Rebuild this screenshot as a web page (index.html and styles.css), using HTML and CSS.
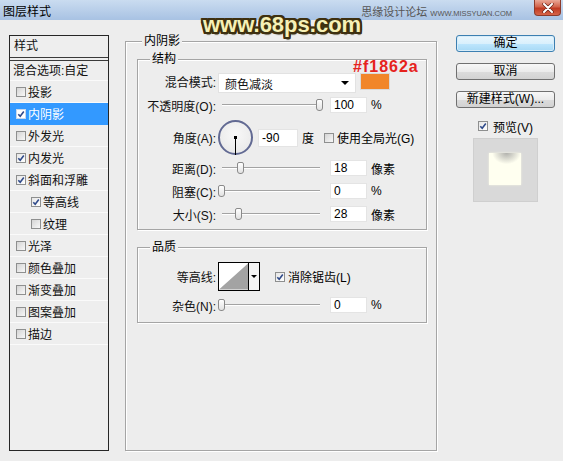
FILE: index.html
```html
<!DOCTYPE html>
<html lang="zh">
<head>
<meta charset="utf-8">
<title>图层样式</title>
<link rel="stylesheet" href="styles.css">
</head>
<body>
<div class="win">
  <div class="titlebar">
    <span class="title">图层样式</span>
    <span class="site">思缘设计论坛 <span class="url">WWW.MISSYUAN.COM</span></span>
    <span class="close"><svg width="14" height="10" viewBox="0 0 14 10"><path d="M3 1 L11 9 M11 1 L3 9" stroke="#6b2418" stroke-width="3.4" stroke-linecap="round"/><path d="M3 1 L11 9 M11 1 L3 9" stroke="#fff" stroke-width="2" stroke-linecap="round"/></svg></span>
  </div>
  <div class="content">
    <div class="styles">
      <div class="hdr">样式</div>
      <div class="blend">混合选项:自定</div>
      <div class="item"><span class="cb"></span>投影</div>
      <div class="item sel"><span class="cb on"><svg viewBox="0 0 8 8"><path d="M1.3 4.2 L3.2 6.2 L6.8 1.6" fill="none" stroke="#2f4a8a" stroke-width="1.6"/></svg></span>内阴影</div>
      <div class="item"><span class="cb"></span>外发光</div>
      <div class="item"><span class="cb on"><svg viewBox="0 0 8 8"><path d="M1.3 4.2 L3.2 6.2 L6.8 1.6" fill="none" stroke="#2f4a8a" stroke-width="1.6"/></svg></span>内发光</div>
      <div class="item"><span class="cb on"><svg viewBox="0 0 8 8"><path d="M1.3 4.2 L3.2 6.2 L6.8 1.6" fill="none" stroke="#2f4a8a" stroke-width="1.6"/></svg></span>斜面和浮雕</div>
      <div class="item sub"><span class="cb on"><svg viewBox="0 0 8 8"><path d="M1.3 4.2 L3.2 6.2 L6.8 1.6" fill="none" stroke="#2f4a8a" stroke-width="1.6"/></svg></span>等高线</div>
      <div class="item sub"><span class="cb"></span>纹理</div>
      <div class="item"><span class="cb"></span>光泽</div>
      <div class="item"><span class="cb"></span>颜色叠加</div>
      <div class="item"><span class="cb"></span>渐变叠加</div>
      <div class="item"><span class="cb"></span>图案叠加</div>
      <div class="item"><span class="cb"></span>描边</div>
    </div>

    <div class="outer group">
      <span class="legend lg-outer">内阴影</span>
      <div class="struct group">
        <span class="legend">结构</span>
        <div class="row r1">
          <span class="lbl">混合模式:</span>
          <div class="select"><span>颜色减淡</span><i class="arrow"></i></div>
          <span class="swatch"></span>
        </div>
        <div class="row r2">
          <span class="lbl">不透明度(O):</span>
          <div class="slider"><span class="thumb" style="left:98px"></span></div>
          <span class="num">100</span>
          <span class="unit">%</span>
        </div>
        <div class="row r3">
          <span class="lbl">角度(A):</span>
          <div class="dial"></div>
          <span class="num wide">-90</span>
          <span class="unit">度</span>
          <span class="cb gl"></span>
          <span class="cbtext">使用全局光(G)</span>
        </div>
        <div class="row r4">
          <span class="lbl">距离(D):</span>
          <div class="slider"><span class="thumb" style="left:19px"></span></div>
          <span class="num">18</span>
          <span class="unit">像素</span>
        </div>
        <div class="row r5">
          <span class="lbl">阻塞(C):</span>
          <div class="slider"><span class="thumb" style="left:0px"></span></div>
          <span class="num">0</span>
          <span class="unit">%</span>
        </div>
        <div class="row r5">
          <span class="lbl">大小(S):</span>
          <div class="slider"><span class="thumb" style="left:17px"></span></div>
          <span class="num">28</span>
          <span class="unit">像素</span>
        </div>
      </div>

      <div class="quality group">
        <span class="legend">品质</span>
        <div class="row q1">
          <span class="lbl">等高线:</span>
          <div class="contour">
            <svg class="curve" width="30" height="27" viewBox="0 0 30 27"><rect width="30" height="27" fill="#fff"/><polygon points="0,27 30,0 30,27" fill="#a3a3a3"/></svg>
            <span class="drop"><i class="arrow small"></i></span>
          </div>
          <span class="cb on aa"><svg viewBox="0 0 8 8"><path d="M1.3 4.2 L3.2 6.2 L6.8 1.6" fill="none" stroke="#2f4a8a" stroke-width="1.6"/></svg></span>
          <span class="cbtext">消除锯齿(L)</span>
        </div>
        <div class="row q2">
          <span class="lbl">杂色(N):</span>
          <div class="slider"><span class="thumb" style="left:0px"></span></div>
          <span class="num">0</span>
          <span class="unit">%</span>
        </div>
      </div>
    </div>

    <div class="side">
      <div class="btn primary">确定</div>
      <div class="btn">取消</div>
      <div class="btn">新建样式(W)...</div>
      <div class="prevrow"><span class="cb on"><svg viewBox="0 0 8 8"><path d="M1.3 4.2 L3.2 6.2 L6.8 1.6" fill="none" stroke="#2f4a8a" stroke-width="1.6"/></svg></span><span>预览(V)</span></div>
      <div class="preview"><div class="swatchprev"></div></div>
    </div>
  </div>

  <div class="wm">www.68ps.com</div>
  <div class="hex">#f1862a</div>
</div>
</body>
</html>
```

FILE: styles.css
```css
* { box-sizing: border-box; }
html, body { margin: 0; padding: 0; }
body {
  background: #ededed;
  font-family: "Liberation Sans", "Noto Sans CJK SC", sans-serif;
  font-size: 12px;
  color: #111;
}
.win {
  position: relative;
  width: 563px;
  height: 461px;
  overflow: hidden;
  background: #ededed;
}

/* title bar */
.titlebar {
  height: 20px;
  display: flex;
  align-items: center;
  background: linear-gradient(#cadcf0, #a8c2e3);
}
.title { margin-left: 3px; font-size: 12px; color: #000; }
.site {
  margin-left: auto;
  margin-right: 22px;
  align-self: flex-end;
  font-size: 11px;
  line-height: 13px;
  color: #555;
  white-space: nowrap;
}
.url { font-size: 7.5px; letter-spacing: 0; color: #555; }
.close {
  align-self: flex-start;
  width: 27px;
  height: 16px;
  margin-right: 2px;
  border: 1px solid #8c3b2c;
  border-top: none;
  border-radius: 0 0 4px 4px;
  background: linear-gradient(#eaa896, #d3644c 45%, #c03a22 55%, #d6654a);
  display: flex;
  align-items: center;
  justify-content: center;
}

/* layout */
.content {
  display: flex;
  align-items: flex-start;
  padding: 15px 0 0 9px;
}

/* styles list */
.styles {
  flex: none;
  width: 100px;
  height: 416px;
  border: 1px solid #262626;
  background: #eeeeee;
}
.hdr {
  height: 25px;
  line-height: 21px;
  padding-left: 4px;
  border-bottom: 4px double #3a3a3a;
}
.blend {
  height: 20px;
  line-height: 20px;
  padding-left: 3px;
  border-bottom: 1px solid #fafafa;
}
.item {
  height: 22px;
  display: flex;
  align-items: center;
  padding-left: 6px;
  border-bottom: 1px solid #fafafa;
}
.item.sub { padding-left: 21px; }
.item .cb { margin-right: 2px; }
.item.sel { background: #3399ff; color: #fff; border-bottom-color: #3399ff; }
.item.sel .cb { background: #fff; border-color: #c7d8ec; }

/* checkbox */
.cb {
  flex: none;
  display: inline-flex;
  width: 10px;
  height: 10px;
  border: 1px solid #8e8f8f;
  background: linear-gradient(135deg, #d4d4d4, #f8f8f8);
}
.cb svg { width: 8px; height: 8px; display: block; }
.cb.on { background: linear-gradient(135deg, #e6e6e6, #ffffff); }

/* group boxes */
.group {
  position: relative;
  border: 1px solid #a5a5a5;
  box-shadow: 1px 1px 0 #fff, inset 1px 1px 0 #fff;
}
.legend {
  position: absolute;
  top: -8px;
  left: 12px;
  padding: 0 2px;
  line-height: 14px;
  background: #ededed;
  color: #000;
}
.legend.lg-outer { left: 16px; }
.outer {
  flex: none;
  margin: 6px 0 0 16px;
  width: 312px;
  height: 410px;
  padding: 17px 0 0 11px;
}
.struct {
  width: 290px;
  height: 171px;
  padding-top: 13px;
}
.quality {
  width: 290px;
  height: 76px;
  margin-top: 17px;
  padding-top: 14px;
}

/* rows */
.row { display: flex; align-items: center; }
.lbl {
  flex: none;
  width: 78px;
  text-align: right;
  white-space: nowrap;
}
.r1 { height: 20px; align-items: flex-start; }
.r1 .lbl { line-height: 20px; }
.r2 { height: 16px; margin-top: 4px; }
.r3 { height: 35px; margin-top: 7px; }
.r4 { height: 16px; margin-top: 5px; }
.r5 { height: 16px; margin-top: 7px; }
.q1 { height: 29px; }
.q2 { height: 16px; margin-top: 6px; }

.select {
  flex: none;
  margin-left: 2px;
  width: 138px;
  height: 20px;
  background: #fff;
  border: 1px solid #e2e2e2;
  display: flex;
  align-items: center;
  padding-left: 6px;
}
.arrow {
  margin-left: auto;
  margin-right: 6px;
  width: 0;
  height: 0;
  border-left: 4px solid transparent;
  border-right: 4px solid transparent;
  border-top: 4px solid #000;
}
.arrow.small {
  margin: 0;
  border-left-width: 3px;
  border-right-width: 3px;
  border-top-width: 3px;
}
.swatch {
  flex: none;
  margin-left: 4px;
  width: 30px;
  height: 17px;
  background: #f1862a;
  border: 1px solid #d9d9d9;
}

.slider {
  flex: none;
  position: relative;
  margin-left: 2px;
  width: 105px;
  height: 16px;
}
.slider::before {
  content: "";
  position: absolute;
  left: 4px;
  right: 3px;
  top: 7px;
  height: 1px;
  background: #a3a3a3;
  border-bottom: 1px solid #fff;
  box-sizing: content-box;
}
.thumb {
  position: absolute;
  top: 2px;
  width: 7px;
  height: 12px;
  border: 1px solid #8a8a8a;
  border-radius: 2px 2px 3px 3px;
  background: linear-gradient(#ffffff, #e2e2e2);
}
.num {
  flex: none;
  margin-left: 7px;
  width: 37px;
  height: 16px;
  line-height: 14px;
  padding-left: 3px;
  background: #fff;
  border: 1px solid #e4e4e4;
  color: #000;
}
.num.wide {
  margin-left: 5px;
  width: 40px;
  height: 18px;
  line-height: 16px;
}
.unit { margin-left: 4px; color: #000; }

.dial {
  flex: none;
  position: relative;
  margin-left: 2px;
  width: 35px;
  height: 35px;
  border-radius: 50%;
  border: 2px solid #626a93;
  background: radial-gradient(circle at 50% 40%, #f8f8f8, #e6e6e6);
}
.dial::before {
  content: "";
  position: absolute;
  left: 14px;
  top: 14px;
  width: 3px;
  height: 3px;
  background: #000;
}
.dial::after {
  content: "";
  position: absolute;
  left: 15px;
  top: 15px;
  width: 1px;
  height: 18px;
  background: #000;
}
.cb.gl { margin-left: 10px; }
.cbtext { margin-left: 3px; white-space: nowrap; color: #000; }

.contour {
  flex: none;
  margin-left: 2px;
  width: 42px;
  height: 29px;
  border: 1px solid #000;
  display: flex;
  background: #fff;
}
.curve { display: block; flex: none; border-right: 1px solid #000; }
.drop {
  flex: 1;
  display: flex;
  align-items: center;
  justify-content: center;
  background: #f4f4f4;
}
.cb.aa { margin-left: 15px; }

/* side buttons */
.side {
  flex: none;
  margin-left: 19px;
  width: 99px;
  display: flex;
  flex-direction: column;
  align-items: center;
}
.btn {
  width: 99px;
  height: 17px;
  line-height: 15px;
  text-align: center;
  border: 1px solid #707070;
  border-radius: 3px;
  background: linear-gradient(#f7f7f7, #ebebeb 50%, #dcdcdc 51%, #d2d2d2);
  color: #000;
  white-space: nowrap;
}
.btn + .btn { margin-top: 11px; }
.btn.primary {
  border-color: #3c7fb1;
  background: linear-gradient(#eaf6fd, #d9f0fc 50%, #bee6fd 51%, #a7d9f5);
  box-shadow: inset 0 0 0 1px #d7ecf8;
}
.prevrow {
  margin-top: 12px;
  height: 12px;
  display: flex;
  align-items: center;
  gap: 5px;
  color: #000;
}
.preview {
  margin-top: 6px;
  width: 65px;
  height: 64px;
  background: #d9d9d9;
  border: 1px solid #cfcfcf;
  padding: 14px 0 0 15px;
}
.swatchprev {
  width: 32px;
  height: 32px;
  background:
    radial-gradient(ellipse 45% 35% at 55% 0%, rgba(150,150,150,0.75), rgba(200,200,200,0) 100%),
    #fffff0;
  box-shadow: 0 0 2px #f4f4e4;
}

/* overlays */
.wm {
  position: absolute;
  left: 203px;
  top: 14px;
  font-family: "Liberation Sans", sans-serif;
  font-weight: bold;
  font-size: 22px;
  line-height: 22px;
  letter-spacing: 0;
  color: #f6f0b6;
  white-space: nowrap;
  text-shadow:
    -2px 0 #3e3010, 2px 0 #3e3010, 0 -2px #3e3010, 0 2px #3e3010,
    -2px -2px #3e3010, 2px -2px #3e3010, -2px 2px #3e3010, 2px 2px #3e3010,
    -1px -2px #3e3010, 1px -2px #3e3010, -1px 2px #3e3010, 1px 2px #3e3010,
    -2px -1px #3e3010, 2px -1px #3e3010, -2px 1px #3e3010, 2px 1px #3e3010,
    1px 3px 1px rgba(40,30,5,0.6);
}
.hex {
  position: absolute;
  left: 353px;
  top: 59px;
  font-family: "Liberation Sans", sans-serif;
  font-weight: bold;
  font-size: 16px;
  line-height: 16px;
  letter-spacing: 1px;
  color: #e6221d;
  white-space: nowrap;
}
```
